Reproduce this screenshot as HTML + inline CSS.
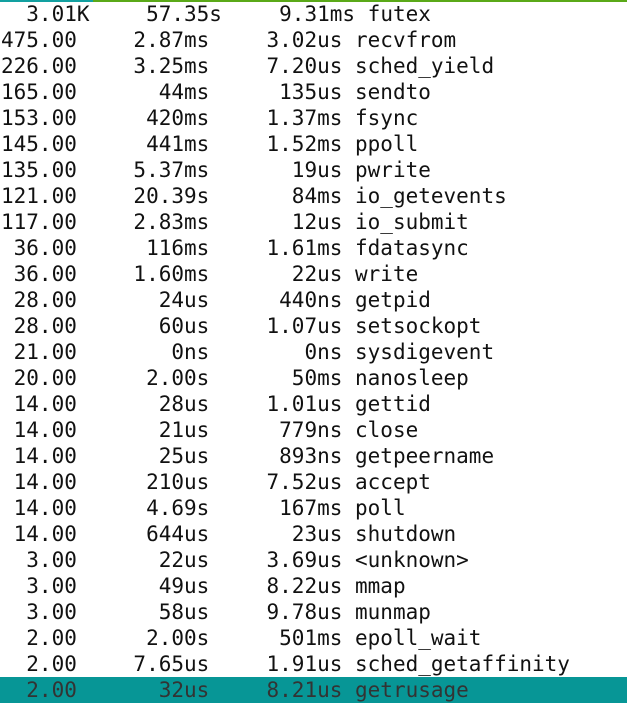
<!DOCTYPE html>
<html><head><meta charset="utf-8"><style>
html,body{margin:0;padding:0;background:#fff;width:627px;height:728px;overflow:hidden;position:relative}
.bar1{position:absolute;left:0;top:0;width:93px;height:2px;background:#12a0a0}
.bar2{position:absolute;left:93px;top:0;width:534px;height:2px;background:#5aa918}
pre{position:absolute;left:1px;top:1px;margin:0;font-family:"DejaVu Sans Mono","Liberation Mono",monospace;font-size:21px;line-height:26px;color:#111}
pre b{font-weight:normal;position:relative;left:6px}
.hl{display:block;background:#079696;color:#333;width:627px;margin-left:-1px;padding-left:1px}
</style></head><body>
<div class="bar1"></div><div class="bar2"></div>
<pre>  3.01K<b>    57.35s</b>     9.31ms futex
475.00<b>    2.87ms</b>     3.02us recvfrom
226.00<b>    3.25ms</b>     7.20us sched_yield
165.00<b>      44ms</b>      135us sendto
153.00<b>     420ms</b>     1.37ms fsync
145.00<b>     441ms</b>     1.52ms ppoll
135.00<b>    5.37ms</b>       19us pwrite
121.00<b>    20.39s</b>       84ms io_getevents
117.00<b>    2.83ms</b>       12us io_submit
 36.00<b>     116ms</b>     1.61ms fdatasync
 36.00<b>    1.60ms</b>       22us write
 28.00<b>      24us</b>      440ns getpid
 28.00<b>      60us</b>     1.07us setsockopt
 21.00<b>       0ns</b>        0ns sysdigevent
 20.00<b>     2.00s</b>       50ms nanosleep
 14.00<b>      28us</b>     1.01us gettid
 14.00<b>      21us</b>      779ns close
 14.00<b>      25us</b>      893ns getpeername
 14.00<b>     210us</b>     7.52us accept
 14.00<b>     4.69s</b>      167ms poll
 14.00<b>     644us</b>       23us shutdown
  3.00<b>      22us</b>     3.69us &lt;unknown&gt;
  3.00<b>      49us</b>     8.22us mmap
  3.00<b>      58us</b>     9.78us munmap
  2.00<b>     2.00s</b>      501ms epoll_wait
  2.00<b>    7.65us</b>     1.91us sched_getaffinity
<span class="hl">  2.00<b>      32us</b>     8.21us getrusage</span></pre>
</body></html>
